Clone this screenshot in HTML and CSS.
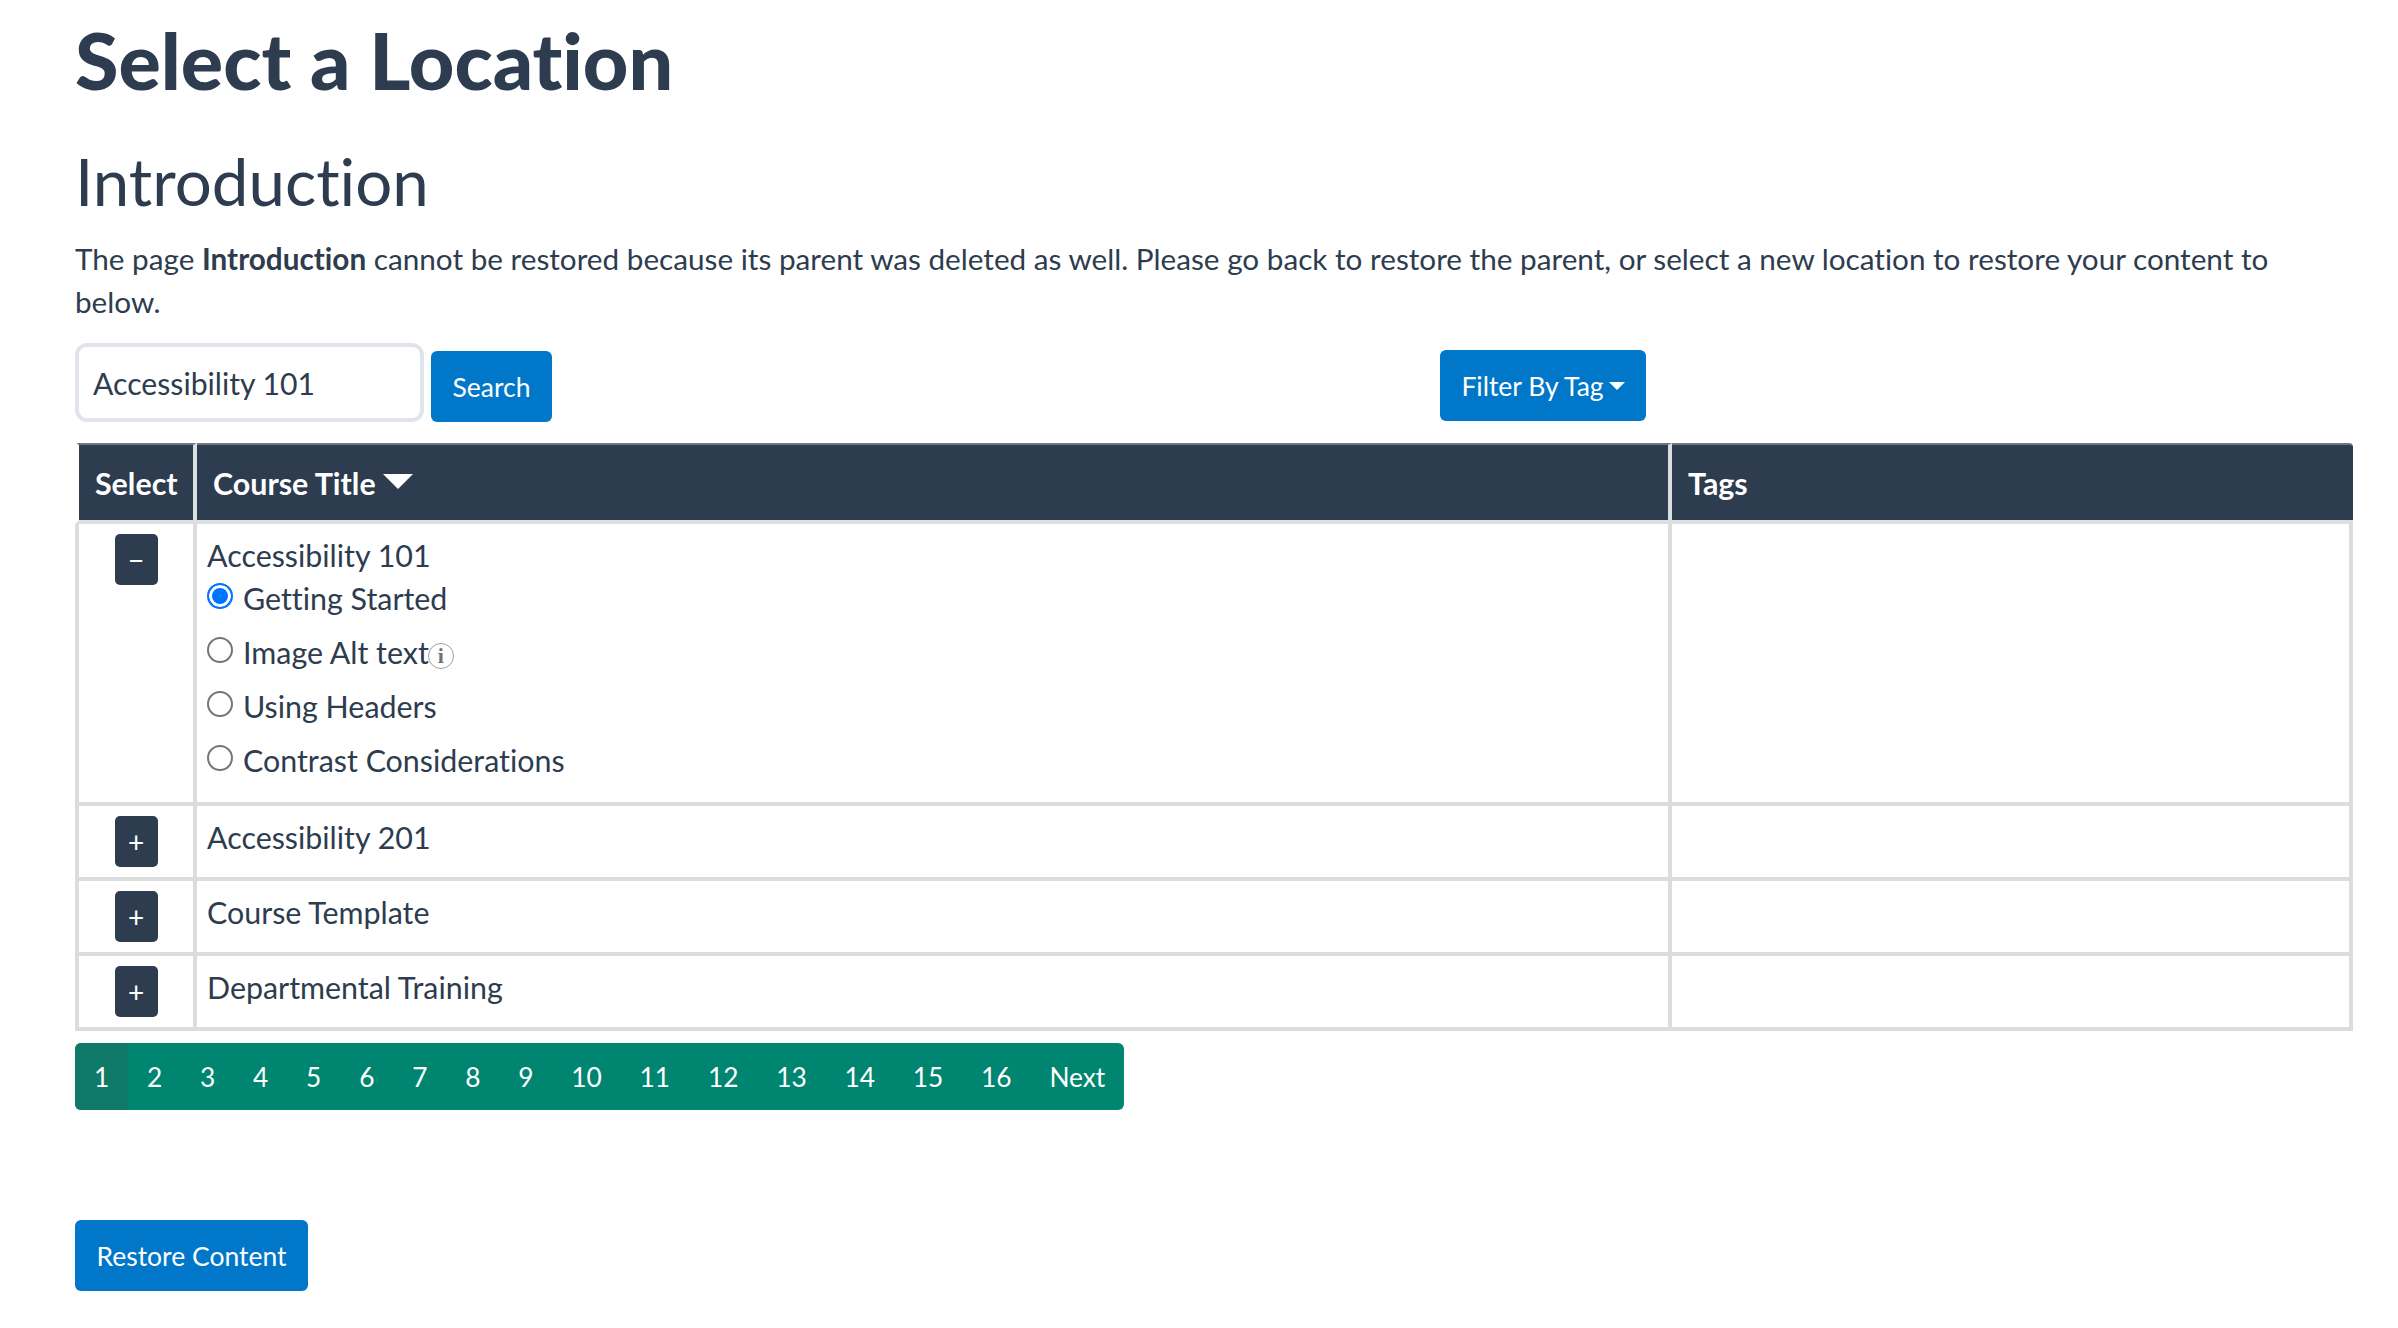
FILE: index.html
```html
<!DOCTYPE html>
<html lang="en">
<head>
<meta charset="utf-8">
<title>Select a Location</title>
<link rel="stylesheet" href="styles.css">
</head>
<body>
<main class="page">
  <h1 class="title">Select a Location</h1>
  <h2 class="subtitle">Introduction</h2>
  <p class="notice">The page <strong>Introduction</strong> cannot be restored because its parent was deleted as well. Please go back to restore the parent, or select a new location to restore your content to below.</p>
  <div class="toolbar">
    <input class="search-input" type="text" value="Accessibility 101" aria-label="Search">
    <button class="btn btn-search" type="button">Search</button>
    <button class="btn btn-filter" type="button">Filter By Tag<span class="caret-small"></span></button>
  </div>
  <table class="courses">
    <colgroup><col class="col-select"><col class="col-title"><col class="col-tags"></colgroup>
    <thead>
      <tr><th class="th-select">Select</th><th class="th-title">Course Title<span class="caret-large"></span></th><th class="th-tags">Tags</th></tr>
    </thead>
    <tbody>
      <tr class="row-open">
        <td class="cell-toggle"><button class="toggle" type="button">−</button></td>
        <td class="cell-title">
          <div class="course-name">Accessibility 101</div>
          <label class="option option-first"><input type="radio" name="loc" checked><span>Getting Started</span></label>
          <label class="option"><input type="radio" name="loc"><span>Image Alt text</span><span class="info">i</span></label>
          <label class="option"><input type="radio" name="loc"><span>Using Headers</span></label>
          <label class="option"><input type="radio" name="loc"><span>Contrast Considerations</span></label>
        </td>
        <td></td>
      </tr>
      <tr class="row-closed">
        <td class="cell-toggle"><button class="toggle" type="button">+</button></td>
        <td class="cell-title">Accessibility 201</td>
        <td></td>
      </tr>
      <tr class="row-closed">
        <td class="cell-toggle"><button class="toggle" type="button">+</button></td>
        <td class="cell-title">Course Template</td>
        <td></td>
      </tr>
      <tr class="row-closed">
        <td class="cell-toggle"><button class="toggle" type="button">+</button></td>
        <td class="cell-title">Departmental Training</td>
        <td></td>
      </tr>
    </tbody>
  </table>
  <nav class="pagination">
    <a class="active">1</a><a>2</a><a>3</a><a>4</a><a>5</a><a>6</a><a>7</a><a>8</a><a>9</a><a>10</a><a>11</a><a>12</a><a>13</a><a>14</a><a>15</a><a>16</a><a>Next</a>
  </nav>
  <button class="btn btn-restore" type="button">Restore Content</button>
</main>
</body>
</html>
```
FILE: styles.css
```css
* { box-sizing: border-box; }
html, body { margin: 0; padding: 0; background: #fff; }
body {
  font-family: Lato, "Open Sans", sans-serif;
  font-variant-ligatures: none;
  color: #2d3c4e;
  font-size: 30.4px;
  overflow: hidden;
}
.page { padding: 0 45px 0 75px; width: 2398px; height: 1328px; display: flex; flex-direction: column; align-items: flex-start; }
.title { margin: 21px 0 0; font-size: 79px; line-height: 78px; font-weight: 900; letter-spacing: 0; color: #2d3c4e; }
.subtitle { margin: 47px 0 0; font-size: 65.4px; line-height: 70px; font-weight: 400; }
.notice { margin: 21px 0 0; font-size: 29.7px; line-height: 43px; width: 2278px; }
.notice strong { font-weight: 700; }
.toolbar { margin-top: 20px; display: flex; align-items: flex-start; width: 100%; height: 100px; }
.search-input {
  width: 349px; height: 79px; padding: 0 14px;
  border: 4px solid #dfe5ea; border-radius: 12px;
  font: 400 30.2px Lato, sans-serif; font-variant-ligatures: none; color: #2d3c4e; background: #fff;
}
.btn {
  display: inline-flex; align-items: center; justify-content: center;
  border: 0; border-radius: 6px; background: #0077c8; color: #fff;
  font: 400 26.5px Lato, sans-serif; font-variant-ligatures: none; padding: 0;
}
.btn-search { width: 121px; height: 71px; margin: 8px 0 0 7px; }
.btn-filter { width: 206px; height: 71px; margin: 7px 0 0 888px; }
.caret-small { display: inline-block; margin-left: 5px; border: 8px solid transparent; border-top: 8px solid #fff; border-bottom: 0; }
.courses { border-collapse: separate; border-spacing: 0; table-layout: fixed; width: 2278px; flex: none; }
.col-select { width: 122px; }
.col-title { width: 1475px; }
.col-tags { width: 681px; }
.courses th {
  height: 81px; background: #2d3c4e; color: #fff; font-size: 30.4px; font-weight: 700; text-align: left;
  border-top: 2px solid #6f7880; border-bottom: 4px solid #dcdfe0; border-right: 4px solid #dcdfe0; padding: 0;
}
.courses th:last-child { border-right: 0; border-top-right-radius: 4px; }
.courses th:first-child { border-left: 4px solid #fff; border-top-left-radius: 4px; }
.th-select { padding-left: 16px !important; }
.th-title { padding-left: 16px !important; }
.th-tags { padding-left: 16px !important; }
.caret-large { display: inline-block; vertical-align: 6px; margin-left: 7px; border-left: 15px solid transparent; border-right: 15px solid transparent; border-top: 15px solid #fff; }
.courses td { border-right: 4px solid #dcdcdc; border-bottom: 4px solid #dcdcdc; padding: 0; vertical-align: top; }
.courses td:first-child { border-left: 4px solid #dcdcdc; }
.row-open td { height: 282px; }
.row-closed td { height: 75px; }
.cell-toggle { text-align: center; }
.toggle {
  width: 43px; height: 51px; margin-top: 10px; padding: 0;
  background: #2d3c4e; color: #fff; border: 0; border-radius: 5px; font: 400 28px Lato, sans-serif;
}
.cell-title { padding-left: 10px !important; }
.row-closed .cell-title { padding-top: 2px !important; line-height: 58px; }
.course-name { line-height: 44px; margin-top: 9px; }
.option { display: flex; align-items: center; height: 54px; }
.option-first { margin-top: -6px; }
.option input {
  appearance: none; width: 26px; height: 26px; margin: 0 10px 5px 0; flex: none;
  border: 2px solid #767676; border-radius: 50%; background: #fff;
}
.option input:checked { border-color: #0075ff; box-shadow: inset 0 0 0 3px #fff; background: #0075ff; }
.info {
  display: inline-flex; align-items: center; justify-content: center;
  width: 26px; height: 26px; border: 1px solid #9aa0a5; border-radius: 50%;
  font: 700 22px "Liberation Serif", serif; color: #6b7278; margin: 8px 0 0 -1px;
}
.pagination { margin-top: 12px; display: flex; height: 67px; background: #008571; border-radius: 6px; overflow: hidden; flex: none; }
.pagination a { display: flex; align-items: center; padding: 0 18.9px; color: #fff; font-size: 26.3px; }
.pagination .active { background: #0e7a67; }
.btn-restore { width: 233px; height: 71px; margin-top: 110px; flex: none; }
```
